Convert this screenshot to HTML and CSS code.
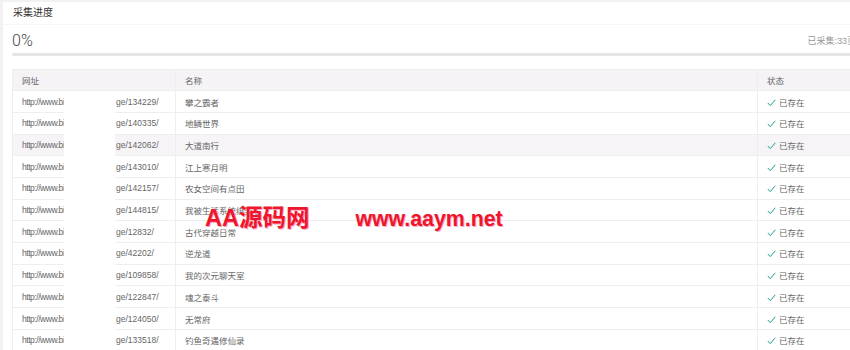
FILE: index.html
```html
<!DOCTYPE html>
<html lang="zh-CN">
<head>
  <meta charset="UTF-8">
  <meta name="viewport" content="width=device-width, initial-scale=1.0">
  <title>采集进度</title>
  <link rel="stylesheet" href="styles.css">
</head>
<body>
  <div class="card">
    <div class="card-header">采集进度</div>
    <div class="card-body">
      <div class="progress-info">
        <span class="percent">0%</span>
        <span class="done">已采集:33页</span>
      </div>
      <div class="progress"><div class="progress-bar" style="width: 0%"></div></div>

      <div class="table-wrap">
        <table class="list">
          <colgroup>
            <col class="col-url">
            <col>
            <col class="col-status">
          </colgroup>
          <thead>
            <tr><th>网址</th><th>名称</th><th>状态</th></tr>
          </thead>
          <tbody id="rows"></tbody>
        </table>
        <div class="mask"></div>
      </div>
    </div>
  </div>

  <div class="watermark"><span class="wm-name">AA源码网</span><span class="wm-site">www.aaym.net</span></div>

  <script>
    const items = [
      ['134229', '攀之霸者'],
      ['140335', '地鳞世界'],
      ['142062', '大道南行'],
      ['143010', '江上寒月明'],
      ['142157', '农女空间有点田'],
      ['144815', '我被生活系统绑架了'],
      ['12832', '古代穿越日常'],
      ['42202', '逆龙道'],
      ['109858', '我的次元聊天室'],
      ['122847', '魂之泰斗'],
      ['124050', '无常府'],
      ['133518', '钓鱼奇遇修仙录']
    ];

    const check = '<svg class="check" width="9" height="8" viewBox="0 0 9 8"><polyline points="0.8,4 3.3,6.6 8.3,0.8" fill="none" stroke="#1a9e92" stroke-width="1"/></svg>';

    const tbody = document.getElementById('rows');
    items.forEach((item, i) => {
      const tr = document.createElement('tr');
      if (i === 2) tr.className = 'hover';
      tr.innerHTML = `
        <td><span class="url-head">http://www.bi</span><span>ge/${item[0]}/</span></td>
        <td>${item[1]}</td>
        <td>${check}<span>已存在</span></td>
      `;
      tbody.appendChild(tr);
    });
  </script>
</body>
</html>
```

FILE: styles.css
```css
html, body {
  margin: 0;
  overflow: hidden;
}

body {
  background: #f2f2f2;
  padding: 2px 0 0 3px;
  font-family: "Liberation Sans", "Noto Sans CJK SC", sans-serif;
  color: #333;
  width: 900px;
}

.card {
  background: #fff;
  width: 900px;
  min-height: 360px;
}

.card-header {
  height: 22px;
  line-height: 22px;
  padding-left: 10px;
  font-size: 10px;
  border-bottom: 1px solid #f6f6f6;
}

.card-body {
  padding: 7px 9px 0 9px;
}

.progress-info {
  display: flex;
  justify-content: space-between;
  align-items: center;
  height: 16px;
  padding-right: 38px;
}

.percent {
  font-family: Roboto, "Liberation Sans", sans-serif;
  font-size: 16px;
  font-weight: 300;
  color: #444;
}

.done {
  font-size: 9px;
  color: #999;
}

.progress {
  margin-top: 5px;
  height: 3px;
  background: #e6e6e6;
  border-radius: 2px;
}

.progress-bar {
  height: 3px;
  background: #5fb878;
}

.table-wrap {
  position: relative;
  margin-top: 13px;
}

.list {
  width: 100%;
  table-layout: fixed;
  border-collapse: collapse;
  font-size: 8.5px;
  color: #666;
}

.list th, .list td {
  height: 20.7px;
  padding: 0 0 0 9px;
  text-align: left;
  font-weight: normal;
  border: 1px solid #eeeeee;
  white-space: nowrap;
  overflow: hidden;
}

.list thead th {
  background: #f5f3f6;
  height: 20.3px;
}

.list tr.hover td {
  background: #f6f4f7;
}

.col-url {
  width: 163px;
}

.col-status {
  width: 136px;
}

.url-head {
  display: inline-block;
  width: 94px;
  letter-spacing: -0.45px;
}

.check {
  margin-right: 3px;
  vertical-align: -1px;
}

.mask {
  position: absolute;
  left: 52px;
  top: 22px;
  width: 51px;
  bottom: 0;
  background: #fff;
}

.watermark {
  position: absolute;
  left: 205px;
  top: 199px;
  display: flex;
  align-items: baseline;
  gap: 46px;
  color: #f0162a;
  font-weight: bold;
  text-shadow: 1px 1px 0 #f7a6c8;
}

.wm-name {
  font-size: 23.5px;
}

.wm-site {
  font-size: 21.3px;
}
```
